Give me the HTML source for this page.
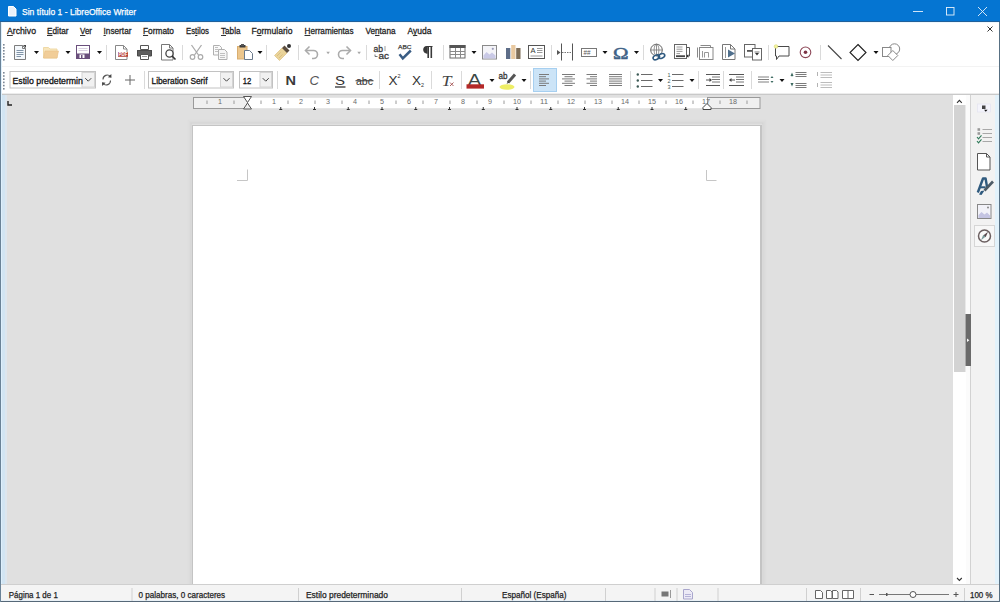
<!DOCTYPE html>
<html><head><meta charset="utf-8"><style>
html,body{margin:0;padding:0;width:1000px;height:602px;overflow:hidden;background:#fff}
svg{display:block;font-family:"Liberation Sans", sans-serif}
</style></head><body>
<svg width="1000" height="602" viewBox="0 0 1000 602" shape-rendering="geometricPrecision">
<rect x="0" y="0" width="1000" height="602" fill="#ffffff" />
<rect x="0" y="0" width="1000" height="21" fill="#0575d2" />
<rect x="0" y="21" width="1000" height="1" fill="#20609a" />
<rect x="0" y="22" width="1000" height="1" fill="#eef7fd" />
<path d="M8.5 6.5h5l2.5 2.5v7h-7.5z" fill="#e8f1fa" stroke="#ffffff" stroke-width="1" />
<text x="22" y="15" font-size="9.2" fill="#ffffff" stroke="#ffffff" stroke-width="0.25" textLength="114" lengthAdjust="spacingAndGlyphs">Sin título 1 - LibreOffice Writer</text>
<line x1="913" y1="11.5" x2="923" y2="11.5" stroke="#e6f1fb" stroke-width="0.9" />
<rect x="946.5" y="7.5" width="7.5" height="7.5" fill="none" stroke="#e6f1fb" stroke-width="0.9" />
<path d="M978 7l9 9M987 7l-9 9" fill="none" stroke="#e6f1fb" stroke-width="0.9" />
<text x="7" y="34" font-size="9.3" fill="#1e1e1e" stroke="#1e1e1e" stroke-width="0.3" textLength="29" lengthAdjust="spacingAndGlyphs">Archivo</text>
<rect x="7.0" y="35" width="5.8" height="1" fill="#333" />
<text x="47" y="34" font-size="9.3" fill="#1e1e1e" stroke="#1e1e1e" stroke-width="0.3" textLength="21.5" lengthAdjust="spacingAndGlyphs">Editar</text>
<rect x="47.0" y="35" width="5.5" height="1" fill="#333" />
<text x="80" y="34" font-size="9.3" fill="#1e1e1e" stroke="#1e1e1e" stroke-width="0.3" textLength="12" lengthAdjust="spacingAndGlyphs">Ver</text>
<rect x="80.0" y="35" width="5.3" height="1" fill="#333" />
<text x="103.5" y="34" font-size="9.3" fill="#1e1e1e" stroke="#1e1e1e" stroke-width="0.3" textLength="28" lengthAdjust="spacingAndGlyphs">Insertar</text>
<rect x="103.5" y="35" width="2.3" height="1" fill="#333" />
<text x="143" y="34" font-size="9.3" fill="#1e1e1e" stroke="#1e1e1e" stroke-width="0.3" textLength="31" lengthAdjust="spacingAndGlyphs">Formato</text>
<rect x="143.0" y="35" width="5.1" height="1" fill="#333" />
<text x="186" y="34" font-size="9.3" fill="#1e1e1e" stroke="#1e1e1e" stroke-width="0.3" textLength="23" lengthAdjust="spacingAndGlyphs">Estilos</text>
<rect x="195.1" y="35" width="2.2" height="1" fill="#333" />
<text x="221" y="34" font-size="9.3" fill="#1e1e1e" stroke="#1e1e1e" stroke-width="0.3" textLength="19.5" lengthAdjust="spacingAndGlyphs">Tabla</text>
<rect x="221.0" y="35" width="5.0" height="1" fill="#333" />
<text x="251.5" y="34" font-size="9.3" fill="#1e1e1e" stroke="#1e1e1e" stroke-width="0.3" textLength="41" lengthAdjust="spacingAndGlyphs">Formulario</text>
<rect x="256.7" y="35" width="4.8" height="1" fill="#333" />
<text x="304.5" y="34" font-size="9.3" fill="#1e1e1e" stroke="#1e1e1e" stroke-width="0.3" textLength="49" lengthAdjust="spacingAndGlyphs">Herramientas</text>
<rect x="304.5" y="35" width="5.9" height="1" fill="#333" />
<text x="365.5" y="34" font-size="9.3" fill="#1e1e1e" stroke="#1e1e1e" stroke-width="0.3" textLength="30" lengthAdjust="spacingAndGlyphs">Ventana</text>
<rect x="375.0" y="35" width="4.5" height="1" fill="#333" />
<text x="407.5" y="34" font-size="9.3" fill="#1e1e1e" stroke="#1e1e1e" stroke-width="0.3" textLength="24" lengthAdjust="spacingAndGlyphs">Ayuda</text>
<rect x="413.2" y="35" width="4.1" height="1" fill="#333" />
<path d="M987.5 26.5l5 5M992.5 26.5l-5 5" fill="none" stroke="#333" stroke-width="1" />
<line x1="1" y1="66.5" x2="999" y2="66.5" stroke="#f3f3f3" stroke-width="1" />
<rect x="1" y="93" width="998" height="1" fill="#ececec" />
<rect x="1" y="94" width="998" height="1" fill="#c9c9c9" />
<rect x="3" y="44" width="1.6" height="1.6" fill="#7b8796" />
<rect x="3" y="47" width="1.6" height="1.6" fill="#7b8796" />
<rect x="3" y="50" width="1.6" height="1.6" fill="#7b8796" />
<rect x="3" y="53" width="1.6" height="1.6" fill="#7b8796" />
<rect x="3" y="56" width="1.6" height="1.6" fill="#7b8796" />
<rect x="3" y="59" width="1.6" height="1.6" fill="#7b8796" />
<rect x="3" y="72" width="1.6" height="1.6" fill="#7b8796" />
<rect x="3" y="75.2" width="1.6" height="1.6" fill="#7b8796" />
<rect x="3" y="78.4" width="1.6" height="1.6" fill="#7b8796" />
<rect x="3" y="81.6" width="1.6" height="1.6" fill="#7b8796" />
<rect x="3" y="84.8" width="1.6" height="1.6" fill="#7b8796" />
<rect x="3" y="88" width="1.6" height="1.6" fill="#7b8796" />
<path d="M14.5 45.5h8l3 3v11h-11z" fill="#f4f8fc" stroke="#7d7d7d" stroke-width="1" />
<path d="M22.5 45.5v3h3" fill="none" stroke="#7d7d7d" stroke-width="1" />
<path d="M23 45h3v3z" fill="#444" />
<line x1="16.5" y1="50.5" x2="23.5" y2="50.5" stroke="#8094a8" stroke-width="1" />
<line x1="16.5" y1="52.5" x2="23.5" y2="52.5" stroke="#8094a8" stroke-width="1" />
<line x1="16.5" y1="54.5" x2="23.5" y2="54.5" stroke="#8094a8" stroke-width="1" />
<line x1="16.5" y1="56.5" x2="21" y2="56.5" stroke="#8094a8" stroke-width="1" />
<path d="M34 51h5l-2.5 3z" fill="#111" />
<path d="M43.5 47.5h5l1.5 1.5h7v9h-13.5z" fill="#f8e6bc" stroke="#efd9a6" stroke-width="1" />
<path d="M45 51h13.5l-1.5 7h-13.5z" fill="#f1cd98" stroke="#e8c088" stroke-width="0.6" />
<path d="M65.5 51h5l-2.5 3z" fill="#111" />
<rect x="76.5" y="45.5" width="13" height="13" fill="#ffffff" stroke="#6a4f7c" stroke-width="1" />
<rect x="76" y="53.5" width="14" height="5.5" fill="#6a4f7c" />
<rect x="79.5" y="54.5" width="5" height="3.5" fill="#ffffff" />
<rect x="81" y="55" width="1.5" height="3" fill="#6a4f7c" />
<line x1="78.5" y1="48.5" x2="87.5" y2="48.5" stroke="#d8cfe0" stroke-width="1" />
<line x1="78.5" y1="50.5" x2="87.5" y2="50.5" stroke="#d8cfe0" stroke-width="1" />
<path d="M97 51h5l-2.5 3z" fill="#111" />
<line x1="106.5" y1="45" x2="106.5" y2="60" stroke="#dadada" stroke-width="1" />
<path d="M115.5 45.5h8l3.5 3.5v10.5h-11.5z" fill="#ffffff" stroke="#888" stroke-width="1" />
<path d="M123.5 45.5v3.5h3.5" fill="none" stroke="#888" stroke-width="1" />
<rect x="118" y="52" width="10" height="4.8" fill="#b5433a" />
<text x="118.6" y="56.3" font-size="5" fill="#fff" textLength="8.8" lengthAdjust="spacingAndGlyphs" font-weight="bold">PDF</text>
<path d="M140.5 45.5h8v4h-8z" fill="#fff" stroke="#555" stroke-width="1" />
<path d="M137 50h15v6h-15z" fill="#5e5e5e" />
<path d="M137.5 50.5h14v5.5h-14z" fill="none" stroke="#4a4a4a" stroke-width="1" />
<path d="M140.5 54.5h8v5h-8z" fill="#fff" stroke="#555" stroke-width="1" />
<line x1="142" y1="56.5" x2="147" y2="56.5" stroke="#999" stroke-width="1" />
<path d="M161.5 44.5h8l3.5 3.5v12h-11.5z" fill="#fff" stroke="#777" stroke-width="1" />
<path d="M169.5 44.5v3.5h3.5" fill="none" stroke="#777" stroke-width="1" />
<circle cx="169.5" cy="53.5" r="3.6" fill="#fff" stroke="#444" stroke-width="1.3"/>
<line x1="172" y1="56" x2="175.5" y2="59.5" stroke="#333" stroke-width="1.6" />
<line x1="182.5" y1="45" x2="182.5" y2="60" stroke="#dadada" stroke-width="1" />
<path d="M191.5 45l7 10M201.5 45l-7 10" fill="none" stroke="#ababab" stroke-width="1.3" />
<circle cx="192.5" cy="57" r="2.3" fill="none" stroke="#ababab" stroke-width="1.2"/>
<circle cx="200.5" cy="57" r="2.3" fill="none" stroke="#ababab" stroke-width="1.2"/>
<path d="M213.5 45.5h6l2 2v7.5h-8z" fill="#fafafa" stroke="#b0b0b0" stroke-width="1" />
<path d="M218.5 49.5h6l2.5 2.5v7.5h-8.5z" fill="#f6f6f6" stroke="#b0b0b0" stroke-width="1" />
<line x1="215" y1="47.5" x2="218" y2="47.5" stroke="#c0c0c0" stroke-width="1" />
<line x1="215" y1="49.5" x2="218" y2="49.5" stroke="#c0c0c0" stroke-width="1" />
<line x1="215" y1="51.5" x2="218" y2="51.5" stroke="#c0c0c0" stroke-width="1" />
<line x1="220" y1="53.5" x2="225" y2="53.5" stroke="#c0c0c0" stroke-width="1" />
<line x1="220" y1="55.5" x2="225" y2="55.5" stroke="#c0c0c0" stroke-width="1" />
<line x1="220" y1="57.5" x2="225" y2="57.5" stroke="#c0c0c0" stroke-width="1" />
<rect x="237.5" y="46.5" width="9.5" height="12.5" fill="#ecc68c" stroke="#d9ae70" stroke-width="1" />
<path d="M239.5 45h6v2.5h-6z" fill="#3c3c3c" />
<rect x="241" y="44" width="3" height="2" fill="#555" />
<path d="M244.5 50.5h5l3 3v6h-8z" fill="#ffffff" stroke="#6b7a8c" stroke-width="1" />
<path d="M257.5 51h5l-2.5 3z" fill="#111" />
<line x1="266.5" y1="45" x2="266.5" y2="60" stroke="#dadada" stroke-width="1" />
<path d="M274.5 55.5l7.5-7.5 5 5-7.5 7.5z" fill="#ead49a" stroke="#dcc080" stroke-width="0.7" />
<path d="M282 48l2.5-2.5 5 5-2.5 2.5z" fill="#5d4f40" />
<circle cx="289" cy="46" r="2" fill="#333"/>
<path d="M277 56l3.5-3.5M279 58l3.5-3.5" fill="none" stroke="#d0b070" stroke-width="0.6" />
<line x1="298.5" y1="45" x2="298.5" y2="60" stroke="#dadada" stroke-width="1" />
<path d="M306 50.5h7.5a4 4 0 0 1 0 8h-1.5" fill="none" stroke="#ababab" stroke-width="1.6" />
<path d="M309.5 46.5l-4 4 4 4" fill="none" stroke="#ababab" stroke-width="1.6" />
<path d="M326.3 51.8h3.6l-1.8 2.4z" fill="#a8a8a8" />
<path d="M350 50.5h-7.5a4 4 0 0 0 0 8h1.5" fill="none" stroke="#ababab" stroke-width="1.6" />
<path d="M346.5 46.5l4 4-4 4" fill="none" stroke="#ababab" stroke-width="1.6" />
<path d="M357.3 51.8h3.6l-1.8 2.4z" fill="#a8a8a8" />
<line x1="366.5" y1="45" x2="366.5" y2="60" stroke="#dadada" stroke-width="1" />
<text x="373.5" y="52.3" font-size="8.5" fill="#3a3a3a" stroke="#3a3a3a" stroke-width="0.3" textLength="9.5" lengthAdjust="spacingAndGlyphs">ab</text>
<text x="378.5" y="59.3" font-size="8.5" fill="#3a3a3a" stroke="#3a3a3a" stroke-width="0.3" textLength="10.5" lengthAdjust="spacingAndGlyphs">ac</text>
<path d="M375 54.5v2h2.5" fill="none" stroke="#555" stroke-width="0.8" />
<path d="M385 46v5" fill="none" stroke="#777" stroke-width="0.7" />
<text x="398" y="48.8" font-size="5.5" fill="#444" stroke="#444" stroke-width="0.25" textLength="13.5" lengthAdjust="spacingAndGlyphs">ABC</text>
<path d="M399.5 54.3l3.3 4 8-7.8" fill="none" stroke="#3a5d84" stroke-width="2.5" />
<path d="M427 46.5h5.5M427 46.5a3.2 3.3 0 0 0 0 6.6z" fill="#3a3a3a" stroke="#3a3a3a" stroke-width="1.2" />
<line x1="428.2" y1="46.5" x2="428.2" y2="58" stroke="#3a3a3a" stroke-width="1.6" />
<line x1="431.3" y1="46.5" x2="431.3" y2="58" stroke="#3a3a3a" stroke-width="1.6" />
<line x1="443.5" y1="45" x2="443.5" y2="60" stroke="#dadada" stroke-width="1" />
<rect x="450" y="45.5" width="15" height="12.5" fill="#fff" stroke="#6a6a6a" stroke-width="1" />
<rect x="449.5" y="45" width="16" height="3" fill="#555" />
<line x1="455.5" y1="48" x2="455.5" y2="58" stroke="#8a8a8a" stroke-width="1" />
<line x1="460.5" y1="48" x2="460.5" y2="58" stroke="#8a8a8a" stroke-width="1" />
<line x1="450" y1="51.5" x2="465" y2="51.5" stroke="#8a8a8a" stroke-width="1" />
<line x1="450" y1="54.5" x2="465" y2="54.5" stroke="#8a8a8a" stroke-width="1" />
<path d="M471.5 51h5l-2.5 3z" fill="#111" />
<rect x="482.5" y="45.5" width="14" height="13.5" fill="#f4f4f8" stroke="#8a8a8a" stroke-width="1" />
<path d="M483.5 58.5v-3l3-3.5 3 2.5 2.5-2 3.5 3v3z" fill="#c9c9e6" />
<circle cx="492.8" cy="48.8" r="1.1" fill="#9a9ab8"/>
<rect x="506" y="48" width="4.3" height="11" fill="#5d6d88" />
<rect x="511.2" y="45" width="4.3" height="14" fill="#e9c9a0" />
<rect x="516.2" y="48" width="4.3" height="11" fill="#7d6c56" />
<rect x="528.5" y="45.5" width="16" height="13" fill="#fff" stroke="#555" stroke-width="1" />
<text x="530.5" y="52.5" font-size="7" fill="#333" textLength="5" lengthAdjust="spacingAndGlyphs">A</text>
<line x1="537" y1="48.5" x2="542.5" y2="48.5" stroke="#999" stroke-width="1" />
<line x1="537" y1="50.5" x2="542.5" y2="50.5" stroke="#999" stroke-width="1" />
<line x1="537" y1="52.5" x2="542.5" y2="52.5" stroke="#999" stroke-width="1" />
<line x1="530.5" y1="56" x2="542.5" y2="56" stroke="#999" stroke-width="1" />
<line x1="551.5" y1="45" x2="551.5" y2="60" stroke="#dadada" stroke-width="1" />
<line x1="561.5" y1="43.5" x2="561.5" y2="60.5" stroke="#555" stroke-width="1" />
<line x1="572.5" y1="43.5" x2="572.5" y2="60.5" stroke="#555" stroke-width="1" />
<path d="M562 52.5h10" fill="none" stroke="#777" stroke-width="1" stroke-dasharray="1.5 1"/>
<path d="M557 50l3.5 2.5-3.5 2.5z" fill="#555" />
<rect x="581.5" y="48.5" width="15" height="8" fill="#fff" stroke="#777" stroke-width="1" />
<text x="583.5" y="55.3" font-size="6.5" fill="#555" textLength="7" lengthAdjust="spacingAndGlyphs">##</text>
<path d="M602.5 51h5l-2.5 3z" fill="#111" />
<text x="613" y="58.5" font-size="16.5" fill="#3e6186" stroke="#3e6186" stroke-width="0.5" textLength="15.5" lengthAdjust="spacingAndGlyphs" font-family='"Liberation Serif", serif'>Ω</text>
<path d="M634 51h5l-2.5 3z" fill="#111" />
<line x1="643.5" y1="45" x2="643.5" y2="60" stroke="#dadada" stroke-width="1" />
<circle cx="656.5" cy="50" r="5.8" fill="#fff" stroke="#666" stroke-width="1"/>
<path d="M650.7 50h11.6M656.5 44.2v11.6" fill="none" stroke="#777" stroke-width="0.8" />
<ellipse cx="656.5" cy="50" rx="2.4" ry="5.8" fill="none" stroke="#777" stroke-width="0.8"/>
<ellipse cx="656.3" cy="57.3" rx="3.4" ry="2.1" transform="rotate(-25 656.3 57.3)" fill="none" stroke="#2f5a80" stroke-width="1.6"/>
<ellipse cx="661.5" cy="56" rx="3.4" ry="2.1" transform="rotate(-25 661.5 56)" fill="none" stroke="#2f5a80" stroke-width="1.6"/>
<rect x="674.5" y="44.5" width="12" height="14" fill="#fff" stroke="#666" stroke-width="1" />
<line x1="676.5" y1="47" x2="682.5" y2="47" stroke="#9a9a9a" stroke-width="1" />
<line x1="676.5" y1="49.2" x2="682.5" y2="49.2" stroke="#9a9a9a" stroke-width="1" />
<line x1="676.5" y1="51.4" x2="682.5" y2="51.4" stroke="#9a9a9a" stroke-width="1" />
<line x1="676.5" y1="53.6" x2="680" y2="53.6" stroke="#9a9a9a" stroke-width="1" />
<rect x="676" y="55.3" width="9" height="1.8" fill="#444" />
<path d="M686.5 47.5h3v8.5h-2" fill="none" stroke="#555" stroke-width="1" />
<path d="M686.3 56l2-1.8v3.6z" fill="#222" />
<path d="M700.5 45.5h10v3" fill="none" stroke="#888" stroke-width="1" />
<path d="M697.5 47.5v10" fill="none" stroke="#888" stroke-width="1" />
<rect x="699.5" y="47.5" width="13.5" height="12" fill="#fff" stroke="#888" stroke-width="1" />
<line x1="702.5" y1="51" x2="702.5" y2="57.5" stroke="#999" stroke-width="1" />
<path d="M704.5 57.5v-5h4v5" fill="none" stroke="#999" stroke-width="1" />
<path d="M722.5 44.5h8l4.5 4.5v10.5h-12.5z" fill="#fff" stroke="#777" stroke-width="1" />
<path d="M730.5 44.5v4.5h4.5" fill="none" stroke="#777" stroke-width="1" />
<line x1="725.5" y1="47" x2="725.5" y2="58" stroke="#999" stroke-width="1" />
<path d="M728 49.5l7 4-7 4z" fill="#4f6f8c" />
<rect x="744.5" y="44.5" width="10.5" height="12.5" fill="#fff" stroke="#666" stroke-width="1" />
<rect x="747" y="50" width="6" height="1.8" fill="#555" />
<rect x="752.5" y="48.5" width="9" height="11.5" fill="#fff" stroke="#666" stroke-width="1" />
<path d="M755 53l2 2.5 2-2.5z" fill="#333" />
<line x1="754.5" y1="52" x2="759.5" y2="52" stroke="#777" stroke-width="1" />
<line x1="768.5" y1="45" x2="768.5" y2="60" stroke="#dadada" stroke-width="1" />
<path d="M775.5 46.5h13.5v9.5h-10l-2.5 3.5v-3.5h-1z" fill="#fff" stroke="#4a4a4a" stroke-width="1" />
<circle cx="776" cy="46.5" r="1.8" fill="#f4f4a0" stroke="#d8d870" stroke-width="0.6"/>
<circle cx="805.5" cy="52.3" r="5.3" fill="#fff" stroke="#8c4656" stroke-width="1.1"/>
<circle cx="805.5" cy="52.3" r="1.8" fill="#7c3446"/>
<line x1="820.5" y1="45" x2="820.5" y2="60" stroke="#dadada" stroke-width="1" />
<line x1="828" y1="45.5" x2="841.5" y2="59" stroke="#444" stroke-width="1.1" />
<path d="M858 44.5l8 8-8 8-8-8z" fill="#fff" stroke="#1e1e1e" stroke-width="1.1" />
<path d="M873.5 51h5l-2.5 3z" fill="#111" />
<circle cx="894.5" cy="49" r="5.2" fill="#fff" stroke="#888" stroke-width="1"/>
<rect x="882.5" y="47.5" width="8.5" height="9" fill="#fff" stroke="#888" stroke-width="1" />
<path d="M892.8 50.5l5 5-5 5-5-5z" fill="#fff" stroke="#888" stroke-width="1" />
<rect x="10.0" y="71.5" width="85.5" height="16.5" fill="#ffffff" stroke="#c2c2c2" stroke-width="1" />
<rect x="82.0" y="72.5" width="12.5" height="14.5" fill="#f1f1f1" stroke="#d4d4d4" stroke-width="1" />
<path d="M85.25 78.2l3 3 3-3" fill="none" stroke="#444" stroke-width="1" />
<clipPath id="c9"><rect x="10.5" y="72" width="72.5" height="16"/></clipPath>
<g clip-path="url(#c9)">
<text x="12.5" y="84" font-size="9.2" fill="#111" stroke="#111" stroke-width="0.3" textLength="85" lengthAdjust="spacingAndGlyphs">Estilo predeterminado</text>
</g>
<path d="M103 79.5a4.3 4.3 0 0 1 7.5-3" fill="none" stroke="#555" stroke-width="1.1" />
<path d="M110.5 80.5a4.3 4.3 0 0 1-7.5 3" fill="none" stroke="#555" stroke-width="1.1" />
<path d="M111.3 74l0.2 3.8-3.6-0.6z" fill="#444" />
<path d="M102.2 86l-0.2-3.8 3.6 0.6z" fill="#444" />
<path d="M130 75v10M125 80h10" fill="none" stroke="#666" stroke-width="1" />
<line x1="144.5" y1="71" x2="144.5" y2="89" stroke="#dadada" stroke-width="1" />
<rect x="148.5" y="71.5" width="85" height="16.5" fill="#ffffff" stroke="#c2c2c2" stroke-width="1" />
<rect x="220.5" y="72.5" width="12" height="14.5" fill="#f1f1f1" stroke="#d4d4d4" stroke-width="1" />
<path d="M223.5 78.2l3 3 3-3" fill="none" stroke="#444" stroke-width="1" />
<text x="151.5" y="84" font-size="9.2" fill="#111" stroke="#111" stroke-width="0.3" textLength="56" lengthAdjust="spacingAndGlyphs">Liberation Serif</text>
<rect x="239.5" y="71.5" width="33" height="16.5" fill="#ffffff" stroke="#c2c2c2" stroke-width="1" />
<rect x="260.0" y="72.5" width="11.5" height="14.5" fill="#f1f1f1" stroke="#d4d4d4" stroke-width="1" />
<path d="M262.75 78.2l3 3 3-3" fill="none" stroke="#444" stroke-width="1" />
<text x="242.8" y="84" font-size="9.8" fill="#111" stroke="#111" stroke-width="0.3" textLength="8.6" lengthAdjust="spacingAndGlyphs">12</text>
<line x1="277.5" y1="71" x2="277.5" y2="89" stroke="#dadada" stroke-width="1" />
<text x="285.5" y="84.8" font-size="13.5" fill="#3a3a3a" textLength="10.5" lengthAdjust="spacingAndGlyphs" font-weight="bold">N</text>
<text x="309.5" y="84.8" font-size="13" fill="#555" textLength="9.5" lengthAdjust="spacingAndGlyphs" font-family='"Liberation Sans", sans-serif' font-style="italic">C</text>
<text x="335" y="84.5" font-size="13" fill="#333" textLength="10" lengthAdjust="spacingAndGlyphs">S</text>
<rect x="335" y="86.3" width="10.5" height="1.4" fill="#444" />
<text x="356" y="84.8" font-size="11" fill="#333" textLength="17" lengthAdjust="spacingAndGlyphs">abc</text>
<rect x="355.5" y="80.2" width="18" height="1.1" fill="#444" />
<line x1="379.5" y1="71" x2="379.5" y2="89" stroke="#dadada" stroke-width="1" />
<text x="388.5" y="84.8" font-size="13" fill="#333" textLength="9" lengthAdjust="spacingAndGlyphs">X</text>
<text x="397.5" y="77.5" font-size="6" fill="#333" textLength="3" lengthAdjust="spacingAndGlyphs">2</text>
<text x="412" y="84.8" font-size="13" fill="#333" textLength="9" lengthAdjust="spacingAndGlyphs">X</text>
<text x="421" y="87" font-size="6" fill="#333" textLength="3" lengthAdjust="spacingAndGlyphs">2</text>
<line x1="431.5" y1="71" x2="431.5" y2="89" stroke="#dadada" stroke-width="1" />
<text x="441.5" y="85.5" font-size="14" fill="#444" textLength="10" lengthAdjust="spacingAndGlyphs" font-family='"Liberation Serif", serif' font-style="italic">T</text>
<path d="M450 82.5l3.5 3.5M453.5 82.5l-3.5 3.5" fill="none" stroke="#a05050" stroke-width="0.9" />
<line x1="461.5" y1="71" x2="461.5" y2="89" stroke="#dadada" stroke-width="1" />
<text x="467.5" y="85.8" font-size="16" fill="#3b4644" textLength="14" lengthAdjust="spacingAndGlyphs">A</text>
<rect x="466.5" y="84.3" width="17.5" height="4.3" fill="#b42828" />
<path d="M489.5 79h5l-2.5 3z" fill="#111" />
<ellipse cx="507" cy="87" rx="7.5" ry="2.8" fill="#eeee66"/>
<text x="498.5" y="79" font-size="9.5" fill="#333" stroke="#333" stroke-width="0.3" textLength="9" lengthAdjust="spacingAndGlyphs">ab</text>
<path d="M508 82.5l7-8" fill="none" stroke="#555" stroke-width="3" />
<path d="M506.5 84l1.5-2.5 1.2 1z" fill="#333" />
<path d="M521.5 79h5l-2.5 3z" fill="#111" />
<line x1="530.5" y1="71" x2="530.5" y2="89" stroke="#dadada" stroke-width="1" />
<rect x="533.5" y="68.5" width="23" height="23" fill="#cce4f7" stroke="#a6cff0" stroke-width="1" />
<line x1="539" y1="74.5" x2="549" y2="74.5" stroke="#7a7a7a" stroke-width="1" />
<line x1="539" y1="76.7" x2="546" y2="76.7" stroke="#7a7a7a" stroke-width="1" />
<line x1="539" y1="78.9" x2="549" y2="78.9" stroke="#7a7a7a" stroke-width="1" />
<line x1="539" y1="81.1" x2="546" y2="81.1" stroke="#7a7a7a" stroke-width="1" />
<line x1="539" y1="83.3" x2="549" y2="83.3" stroke="#7a7a7a" stroke-width="1" />
<line x1="539" y1="85.5" x2="546" y2="85.5" stroke="#7a7a7a" stroke-width="1" />
<line x1="562.0" y1="74.5" x2="575.0" y2="74.5" stroke="#7a7a7a" stroke-width="1" />
<line x1="564.5" y1="76.7" x2="572.5" y2="76.7" stroke="#7a7a7a" stroke-width="1" />
<line x1="562.0" y1="78.9" x2="575.0" y2="78.9" stroke="#7a7a7a" stroke-width="1" />
<line x1="564.5" y1="81.1" x2="572.5" y2="81.1" stroke="#7a7a7a" stroke-width="1" />
<line x1="562.0" y1="83.3" x2="575.0" y2="83.3" stroke="#7a7a7a" stroke-width="1" />
<line x1="564.5" y1="85.5" x2="572.5" y2="85.5" stroke="#7a7a7a" stroke-width="1" />
<line x1="586.5" y1="74.5" x2="597.0" y2="74.5" stroke="#7a7a7a" stroke-width="1" />
<line x1="590.0" y1="76.7" x2="597.0" y2="76.7" stroke="#7a7a7a" stroke-width="1" />
<line x1="586.5" y1="78.9" x2="597.0" y2="78.9" stroke="#7a7a7a" stroke-width="1" />
<line x1="590.0" y1="81.1" x2="597.0" y2="81.1" stroke="#7a7a7a" stroke-width="1" />
<line x1="586.5" y1="83.3" x2="597.0" y2="83.3" stroke="#7a7a7a" stroke-width="1" />
<line x1="590.0" y1="85.5" x2="597.0" y2="85.5" stroke="#7a7a7a" stroke-width="1" />
<line x1="609" y1="74.5" x2="622" y2="74.5" stroke="#7a7a7a" stroke-width="1" />
<line x1="609" y1="76.7" x2="622" y2="76.7" stroke="#7a7a7a" stroke-width="1" />
<line x1="609" y1="78.9" x2="622" y2="78.9" stroke="#7a7a7a" stroke-width="1" />
<line x1="609" y1="81.1" x2="622" y2="81.1" stroke="#7a7a7a" stroke-width="1" />
<line x1="609" y1="83.3" x2="622" y2="83.3" stroke="#7a7a7a" stroke-width="1" />
<line x1="609" y1="85.5" x2="622" y2="85.5" stroke="#7a7a7a" stroke-width="1" />
<line x1="630.5" y1="71" x2="630.5" y2="89" stroke="#dadada" stroke-width="1" />
<circle cx="637.8" cy="74.5" r="1.2" fill="#3c5a55"/>
<line x1="641" y1="74.5" x2="652.5" y2="74.5" stroke="#6a6a6a" stroke-width="1" />
<circle cx="637.8" cy="80.5" r="1.2" fill="#3c5a55"/>
<line x1="641" y1="80.5" x2="652.5" y2="80.5" stroke="#6a6a6a" stroke-width="1" />
<circle cx="637.8" cy="86.5" r="1.2" fill="#3c5a55"/>
<line x1="641" y1="86.5" x2="652.5" y2="86.5" stroke="#6a6a6a" stroke-width="1" />
<path d="M658 79h5l-2.5 3z" fill="#111" />
<text x="667.5" y="76.7" font-size="6" fill="#3c5a55" textLength="3" lengthAdjust="spacingAndGlyphs">1</text>
<line x1="672" y1="74.5" x2="683.5" y2="74.5" stroke="#6a6a6a" stroke-width="1" />
<text x="667.5" y="82.7" font-size="6" fill="#3c5a55" textLength="3" lengthAdjust="spacingAndGlyphs">2</text>
<line x1="672" y1="80.5" x2="683.5" y2="80.5" stroke="#6a6a6a" stroke-width="1" />
<text x="667.5" y="88.7" font-size="6" fill="#3c5a55" textLength="3" lengthAdjust="spacingAndGlyphs">3</text>
<line x1="672" y1="86.5" x2="683.5" y2="86.5" stroke="#6a6a6a" stroke-width="1" />
<path d="M689.5 79h5l-2.5 3z" fill="#111" />
<line x1="698.5" y1="71" x2="698.5" y2="89" stroke="#dadada" stroke-width="1" />
<line x1="706" y1="74.5" x2="720" y2="74.5" stroke="#555" stroke-width="1" />
<line x1="712" y1="77" x2="720" y2="77" stroke="#777" stroke-width="1" />
<line x1="712" y1="79.5" x2="720" y2="79.5" stroke="#777" stroke-width="1" />
<line x1="712" y1="82" x2="720" y2="82" stroke="#777" stroke-width="1" />
<path d="M706 80h4" fill="none" stroke="#555" stroke-width="1" />
<path d="M709.5 78l2.5 2-2.5 2z" fill="#444" />
<line x1="706" y1="85.5" x2="720" y2="85.5" stroke="#555" stroke-width="1" />
<line x1="723.5" y1="71" x2="723.5" y2="89" stroke="#dadada" stroke-width="1" />
<line x1="729" y1="74.5" x2="744" y2="74.5" stroke="#555" stroke-width="1" />
<line x1="736" y1="77" x2="744" y2="77" stroke="#777" stroke-width="1" />
<line x1="736" y1="79.5" x2="744" y2="79.5" stroke="#777" stroke-width="1" />
<line x1="736" y1="82" x2="744" y2="82" stroke="#777" stroke-width="1" />
<path d="M731 80h4" fill="none" stroke="#555" stroke-width="1" />
<path d="M731.5 78l-2.5 2 2.5 2z" fill="#444" />
<line x1="729" y1="85.5" x2="744" y2="85.5" stroke="#555" stroke-width="1" />
<line x1="751.5" y1="71" x2="751.5" y2="89" stroke="#dadada" stroke-width="1" />
<line x1="758" y1="77" x2="769" y2="77" stroke="#808080" stroke-width="1" />
<line x1="758" y1="79.5" x2="769" y2="79.5" stroke="#808080" stroke-width="1" />
<line x1="758" y1="82" x2="769" y2="82" stroke="#808080" stroke-width="1" />
<path d="M770.5 78l1.5-2 1.5 2zM770.5 81l1.5 2 1.5-2z" fill="#3c6a60" />
<path d="M779.5 79h5l-2.5 3z" fill="#111" />
<path d="M790.5 76l1.5-3.5 1.5 3.5zM790.5 83l1.5 3.5 1.5-3.5z" fill="#3c6a60" />
<path d="M792 75v1.5M792 83v1" fill="none" stroke="#3c6a60" stroke-width="0.8" />
<line x1="795.5" y1="72.5" x2="806.5" y2="72.5" stroke="#7a7a7a" stroke-width="1" />
<line x1="795.5" y1="74.5" x2="806.5" y2="74.5" stroke="#7a7a7a" stroke-width="1" />
<line x1="795.5" y1="76.5" x2="806.5" y2="76.5" stroke="#7a7a7a" stroke-width="1" />
<line x1="795.5" y1="83.5" x2="806.5" y2="83.5" stroke="#7a7a7a" stroke-width="1" />
<line x1="795.5" y1="85.5" x2="806.5" y2="85.5" stroke="#7a7a7a" stroke-width="1" />
<line x1="795.5" y1="87.5" x2="806.5" y2="87.5" stroke="#7a7a7a" stroke-width="1" />
<path d="M817.5 72v4M817.5 83v4" fill="none" stroke="#aaa" stroke-width="0.9" />
<line x1="820.5" y1="72.5" x2="832" y2="72.5" stroke="#bcbcbc" stroke-width="1" />
<line x1="820.5" y1="75" x2="832" y2="75" stroke="#bcbcbc" stroke-width="1" />
<line x1="820.5" y1="77.5" x2="832" y2="77.5" stroke="#bcbcbc" stroke-width="1" />
<line x1="820.5" y1="82.5" x2="832" y2="82.5" stroke="#bcbcbc" stroke-width="1" />
<line x1="820.5" y1="85" x2="832" y2="85" stroke="#bcbcbc" stroke-width="1" />
<line x1="820.5" y1="87.5" x2="832" y2="87.5" stroke="#bcbcbc" stroke-width="1" />
<rect x="1" y="95" width="952" height="490" fill="#e0e0e0" />
<rect x="1" y="95" width="1" height="490" fill="#def0fd" />
<rect x="2" y="95" width="3" height="490" fill="#d2e5f3" />
<rect x="5" y="95" width="2" height="490" fill="#dde6ee" />
<path d="M8 101v4h4" fill="none" stroke="#222" stroke-width="1.4" />
<rect x="193" y="97" width="567" height="12" fill="#ffffff" />
<rect x="193.5" y="97.5" width="54" height="11" fill="#f0f0f0" stroke="#9a9a9a" stroke-width="1" />
<rect x="707.5" y="97.5" width="52.5" height="11" fill="#f0f0f0" stroke="#9a9a9a" stroke-width="1" />
<line x1="248" y1="97.5" x2="707" y2="97.5" stroke="#e6e6e6" stroke-width="1" />
<line x1="248" y1="108.5" x2="707" y2="108.5" stroke="#e6e6e6" stroke-width="1" />
<text x="220.0" y="104.4" font-size="7.6" fill="#6a6a6a" textLength="4" lengthAdjust="spacingAndGlyphs" text-anchor="middle">1</text>
<text x="274.0" y="104.4" font-size="7.6" fill="#6a6a6a" textLength="4" lengthAdjust="spacingAndGlyphs" text-anchor="middle">1</text>
<text x="301.0" y="104.4" font-size="7.6" fill="#6a6a6a" textLength="4" lengthAdjust="spacingAndGlyphs" text-anchor="middle">2</text>
<text x="328.0" y="104.4" font-size="7.6" fill="#6a6a6a" textLength="4" lengthAdjust="spacingAndGlyphs" text-anchor="middle">3</text>
<text x="355.0" y="104.4" font-size="7.6" fill="#6a6a6a" textLength="4" lengthAdjust="spacingAndGlyphs" text-anchor="middle">4</text>
<text x="382.0" y="104.4" font-size="7.6" fill="#6a6a6a" textLength="4" lengthAdjust="spacingAndGlyphs" text-anchor="middle">5</text>
<text x="409.0" y="104.4" font-size="7.6" fill="#6a6a6a" textLength="4" lengthAdjust="spacingAndGlyphs" text-anchor="middle">6</text>
<text x="436.0" y="104.4" font-size="7.6" fill="#6a6a6a" textLength="4" lengthAdjust="spacingAndGlyphs" text-anchor="middle">7</text>
<text x="463.0" y="104.4" font-size="7.6" fill="#6a6a6a" textLength="4" lengthAdjust="spacingAndGlyphs" text-anchor="middle">8</text>
<text x="490.0" y="104.4" font-size="7.6" fill="#6a6a6a" textLength="4" lengthAdjust="spacingAndGlyphs" text-anchor="middle">9</text>
<text x="517.0" y="104.4" font-size="7.6" fill="#6a6a6a" textLength="8" lengthAdjust="spacingAndGlyphs" text-anchor="middle">10</text>
<text x="544.0" y="104.4" font-size="7.6" fill="#6a6a6a" textLength="8" lengthAdjust="spacingAndGlyphs" text-anchor="middle">11</text>
<text x="571.0" y="104.4" font-size="7.6" fill="#6a6a6a" textLength="8" lengthAdjust="spacingAndGlyphs" text-anchor="middle">12</text>
<text x="598.0" y="104.4" font-size="7.6" fill="#6a6a6a" textLength="8" lengthAdjust="spacingAndGlyphs" text-anchor="middle">13</text>
<text x="625.0" y="104.4" font-size="7.6" fill="#6a6a6a" textLength="8" lengthAdjust="spacingAndGlyphs" text-anchor="middle">14</text>
<text x="652.0" y="104.4" font-size="7.6" fill="#6a6a6a" textLength="8" lengthAdjust="spacingAndGlyphs" text-anchor="middle">15</text>
<text x="679.0" y="104.4" font-size="7.6" fill="#6a6a6a" textLength="8" lengthAdjust="spacingAndGlyphs" text-anchor="middle">16</text>
<text x="706.0" y="104.4" font-size="7.6" fill="#6a6a6a" textLength="8" lengthAdjust="spacingAndGlyphs" text-anchor="middle">17</text>
<text x="733.0" y="104.4" font-size="7.6" fill="#6a6a6a" textLength="8" lengthAdjust="spacingAndGlyphs" text-anchor="middle">18</text>
<line x1="207.0" y1="100.5" x2="207.0" y2="104" stroke="#9a9a9a" stroke-width="1" />
<line x1="234.0" y1="100.5" x2="234.0" y2="104" stroke="#9a9a9a" stroke-width="1" />
<line x1="261.0" y1="100.5" x2="261.0" y2="104" stroke="#9a9a9a" stroke-width="1" />
<line x1="288.0" y1="100.5" x2="288.0" y2="104" stroke="#9a9a9a" stroke-width="1" />
<line x1="315.0" y1="100.5" x2="315.0" y2="104" stroke="#9a9a9a" stroke-width="1" />
<line x1="342.0" y1="100.5" x2="342.0" y2="104" stroke="#9a9a9a" stroke-width="1" />
<line x1="369.0" y1="100.5" x2="369.0" y2="104" stroke="#9a9a9a" stroke-width="1" />
<line x1="396.0" y1="100.5" x2="396.0" y2="104" stroke="#9a9a9a" stroke-width="1" />
<line x1="423.0" y1="100.5" x2="423.0" y2="104" stroke="#9a9a9a" stroke-width="1" />
<line x1="450.0" y1="100.5" x2="450.0" y2="104" stroke="#9a9a9a" stroke-width="1" />
<line x1="477.0" y1="100.5" x2="477.0" y2="104" stroke="#9a9a9a" stroke-width="1" />
<line x1="504.0" y1="100.5" x2="504.0" y2="104" stroke="#9a9a9a" stroke-width="1" />
<line x1="531.0" y1="100.5" x2="531.0" y2="104" stroke="#9a9a9a" stroke-width="1" />
<line x1="558.0" y1="100.5" x2="558.0" y2="104" stroke="#9a9a9a" stroke-width="1" />
<line x1="585.0" y1="100.5" x2="585.0" y2="104" stroke="#9a9a9a" stroke-width="1" />
<line x1="612.0" y1="100.5" x2="612.0" y2="104" stroke="#9a9a9a" stroke-width="1" />
<line x1="639.0" y1="100.5" x2="639.0" y2="104" stroke="#9a9a9a" stroke-width="1" />
<line x1="666.0" y1="100.5" x2="666.0" y2="104" stroke="#9a9a9a" stroke-width="1" />
<line x1="693.0" y1="100.5" x2="693.0" y2="104" stroke="#9a9a9a" stroke-width="1" />
<line x1="720.0" y1="100.5" x2="720.0" y2="104" stroke="#9a9a9a" stroke-width="1" />
<line x1="747.0" y1="100.5" x2="747.0" y2="104" stroke="#9a9a9a" stroke-width="1" />
<path d="M279.25 109.5h3M280.75 107v2.5" fill="none" stroke="#333" stroke-width="1" />
<path d="M313.0 109.5h3M314.5 107v2.5" fill="none" stroke="#333" stroke-width="1" />
<path d="M346.75 109.5h3M348.25 107v2.5" fill="none" stroke="#333" stroke-width="1" />
<path d="M380.5 109.5h3M382.0 107v2.5" fill="none" stroke="#333" stroke-width="1" />
<path d="M414.25 109.5h3M415.75 107v2.5" fill="none" stroke="#333" stroke-width="1" />
<path d="M448.0 109.5h3M449.5 107v2.5" fill="none" stroke="#333" stroke-width="1" />
<path d="M481.75 109.5h3M483.25 107v2.5" fill="none" stroke="#333" stroke-width="1" />
<path d="M515.5 109.5h3M517.0 107v2.5" fill="none" stroke="#333" stroke-width="1" />
<path d="M549.25 109.5h3M550.75 107v2.5" fill="none" stroke="#333" stroke-width="1" />
<path d="M583.0 109.5h3M584.5 107v2.5" fill="none" stroke="#333" stroke-width="1" />
<path d="M616.75 109.5h3M618.25 107v2.5" fill="none" stroke="#333" stroke-width="1" />
<path d="M650.5 109.5h3M652.0 107v2.5" fill="none" stroke="#333" stroke-width="1" />
<path d="M684.25 109.5h3M685.75 107v2.5" fill="none" stroke="#333" stroke-width="1" />
<path d="M243.5 96.5h8l-4 6z" fill="#fff" stroke="#555" stroke-width="1" />
<path d="M243.5 109h8l-4-6z" fill="#eee" stroke="#555" stroke-width="1" />
<path d="M703 109.5h8v-2l-4-4-4 4z" fill="#fff" stroke="#444" stroke-width="1" />
<rect x="191" y="123" width="572" height="470" fill="none" stroke="#d2d2d2" stroke-width="1" />
<rect x="190" y="122" width="574" height="470" fill="none" stroke="#d8d8d8" stroke-width="1" />
<rect x="189" y="121" width="576" height="470" fill="none" stroke="#dbdbdb" stroke-width="1" />
<rect x="188" y="120" width="578" height="470" fill="none" stroke="#dddddd" stroke-width="1" />
<rect x="192" y="125" width="570" height="460" fill="#c4c4c4" />
<rect x="193" y="126" width="567" height="459" fill="#ffffff" />
<path d="M237 180.5h10.5v-11" fill="none" stroke="#c6c6c6" stroke-width="1" />
<path d="M706.5 170v10.5h10" fill="none" stroke="#c6c6c6" stroke-width="1" />
<rect x="953" y="95" width="13" height="490" fill="#ffffff" />
<rect x="954" y="105" width="11.5" height="267" fill="#d3d3d3" />
<path d="M957 102.8l2.4-2.4 2.4 2.4" fill="none" stroke="#333" stroke-width="1.1" />
<path d="M957 578l2.4 2.4 2.4-2.4" fill="none" stroke="#333" stroke-width="1.1" />
<rect x="966" y="95" width="4" height="490" fill="#fbfbfb" />
<line x1="970.5" y1="95" x2="970.5" y2="585" stroke="#d2d2d2" stroke-width="1" />
<rect x="965.5" y="314" width="5.5" height="52" fill="#6a6a6a" />
<path d="M967 338.5l2.3 1.8-2.3 1.8z" fill="#ffffff" />
<rect x="971" y="95" width="28" height="490" fill="#f2f2f2" />
<rect x="995" y="95" width="4" height="490" fill="#e2f2fb" />
<rect x="977.5" y="104" width="13" height="8" fill="#f4f4fb" stroke="#e2e2ee" stroke-width="0.6" />
<rect x="982" y="105.5" width="3.5" height="3.5" fill="#444" />
<path d="M984 109.8h3.6l-1.8 2z" fill="#111" />
<rect x="977.5" y="128.2" width="2.6" height="2.6" fill="#999"/>
<line x1="982.5" y1="129.5" x2="992" y2="129.5" stroke="#a8a8a8" stroke-width="1" />
<rect x="977.5" y="132.2" width="2.6" height="2.6" fill="#999"/>
<line x1="982.5" y1="133.5" x2="992" y2="133.5" stroke="#a8a8a8" stroke-width="1" />
<path d="M977 137.0l1.5 1.8 3-3.5" fill="none" stroke="#2f7a5a" stroke-width="1.1" />
<line x1="982.5" y1="137.5" x2="992" y2="137.5" stroke="#a8a8a8" stroke-width="1" />
<path d="M977 141.0l1.5 1.8 3-3.5" fill="none" stroke="#2f7a5a" stroke-width="1.1" />
<line x1="982.5" y1="141.5" x2="992" y2="141.5" stroke="#a8a8a8" stroke-width="1" />
<path d="M977.5 153.5h9l3.5 3.5v13h-12.5z" fill="#fff" stroke="#555" stroke-width="1" />
<path d="M986.5 153.5v3.5h3.5" fill="none" stroke="#555" stroke-width="1" />
<path d="M977.8 192.5l5.2-14h2.6l1.6 9.5" fill="none" stroke="#2f5a7e" stroke-width="2.4" stroke-linejoin="round"/>
<path d="M979.5 187.3h6" fill="none" stroke="#2f5a7e" stroke-width="2" />
<path d="M993 181.5l-8.5 9" fill="none" stroke="#4d5b66" stroke-width="2.6" />
<path d="M984.5 190.5l-3 4.5 -2.5-0.5 2-3.5z" fill="#2f5a7e" />
<rect x="977.5" y="204.5" width="13.5" height="14" fill="#f2f2f8" stroke="#888" stroke-width="1" />
<path d="M978.5 218v-3l3-3 3 2.5 2.5-2 3 3v2.5z" fill="#c4c4e2" />
<circle cx="988" cy="207.5" r="1" fill="#888"/>
<rect x="974.5" y="225.5" width="20" height="21" fill="#f7f7f7" stroke="#d6d6d6" stroke-width="1" />
<circle cx="984.5" cy="236" r="6" fill="#fafafa" stroke="#6b5f60" stroke-width="1.5"/>
<path d="M988 231.8l-2.3 5.5-2.2-2z" fill="#5a4a4e" />
<path d="M981 240.2l2.3-5.5 2.2 2z" fill="#7a9a9a" />
<rect x="1" y="585" width="998" height="17" fill="#f4f4f4" />
<line x1="1" y1="584.5" x2="999" y2="584.5" stroke="#cfcfcf" stroke-width="1" />
<rect x="0" y="600" width="1000" height="1" fill="#e9f1f7" />
<rect x="0" y="601" width="1000" height="1" fill="#566878" />
<line x1="132" y1="588" x2="132" y2="601" stroke="#d0d0d0" stroke-width="1" />
<line x1="298.5" y1="588" x2="298.5" y2="601" stroke="#d0d0d0" stroke-width="1" />
<line x1="461.5" y1="588" x2="461.5" y2="601" stroke="#d0d0d0" stroke-width="1" />
<line x1="605.5" y1="588" x2="605.5" y2="601" stroke="#d0d0d0" stroke-width="1" />
<line x1="655" y1="588" x2="655" y2="601" stroke="#d0d0d0" stroke-width="1" />
<line x1="677" y1="588" x2="677" y2="601" stroke="#d0d0d0" stroke-width="1" />
<line x1="718" y1="588" x2="718" y2="601" stroke="#d0d0d0" stroke-width="1" />
<line x1="806.5" y1="588" x2="806.5" y2="601" stroke="#d0d0d0" stroke-width="1" />
<line x1="860.5" y1="588" x2="860.5" y2="601" stroke="#d0d0d0" stroke-width="1" />
<line x1="964.5" y1="588" x2="964.5" y2="601" stroke="#d0d0d0" stroke-width="1" />
<text x="8.8" y="598" font-size="8.8" fill="#222" stroke="#222" stroke-width="0.25" textLength="49" lengthAdjust="spacingAndGlyphs">Página 1 de 1</text>
<text x="138.6" y="598" font-size="8.8" fill="#222" stroke="#222" stroke-width="0.25" textLength="86.5" lengthAdjust="spacingAndGlyphs">0 palabras, 0 caracteres</text>
<text x="306" y="598" font-size="8.8" fill="#222" stroke="#222" stroke-width="0.25" textLength="82" lengthAdjust="spacingAndGlyphs">Estilo predeterminado</text>
<text x="502" y="598" font-size="8.8" fill="#222" stroke="#222" stroke-width="0.25" textLength="64.5" lengthAdjust="spacingAndGlyphs">Español (España)</text>
<rect x="661.5" y="591.5" width="7" height="5" fill="#777" />
<line x1="670.5" y1="590" x2="670.5" y2="598" stroke="#999" stroke-width="1" />
<path d="M683.5 589.5h6l3 3v6.5h-9z" fill="#eceaf6" stroke="#a9a6cc" stroke-width="1" />
<line x1="685" y1="594.5" x2="691" y2="594.5" stroke="#b6b3d8" stroke-width="1" />
<line x1="685" y1="596.5" x2="691" y2="596.5" stroke="#b6b3d8" stroke-width="1" />
<path d="M815.5 590.5h5l2 2v6h-7z" fill="#fff" stroke="#666" stroke-width="1" />
<path d="M826.5 590.5h4l1.5 1.5v6.5h-5.5zM832.5 590.5h4l1.5 1.5v6.5h-5.5z" fill="#fff" stroke="#666" stroke-width="1" />
<path d="M842.5 590.5h11v8h-11z" fill="#fff" stroke="#666" stroke-width="1" />
<line x1="848" y1="590.5" x2="848" y2="598.5" stroke="#666" stroke-width="1" />
<line x1="869.5" y1="594.5" x2="874" y2="594.5" stroke="#555" stroke-width="1" />
<line x1="879" y1="594.5" x2="949" y2="594.5" stroke="#777" stroke-width="1" />
<rect x="886" y="593" width="1.5" height="3" fill="#555" />
<circle cx="913" cy="594.5" r="3" fill="#fff" stroke="#555" stroke-width="1"/>
<path d="M953.5 594.5h5M956 592v5" fill="none" stroke="#555" stroke-width="1" />
<text x="970" y="598" font-size="8.8" fill="#222" stroke="#222" stroke-width="0.25" textLength="22.5" lengthAdjust="spacingAndGlyphs">100 %</text>
<line x1="0.5" y1="22" x2="0.5" y2="602" stroke="#6a8398" stroke-width="1" />
<line x1="1.5" y1="22" x2="1.5" y2="95" stroke="#def0fd" stroke-width="1" />
<line x1="999.5" y1="22" x2="999.5" y2="602" stroke="#587083" stroke-width="1" />
</svg>
</body></html>
